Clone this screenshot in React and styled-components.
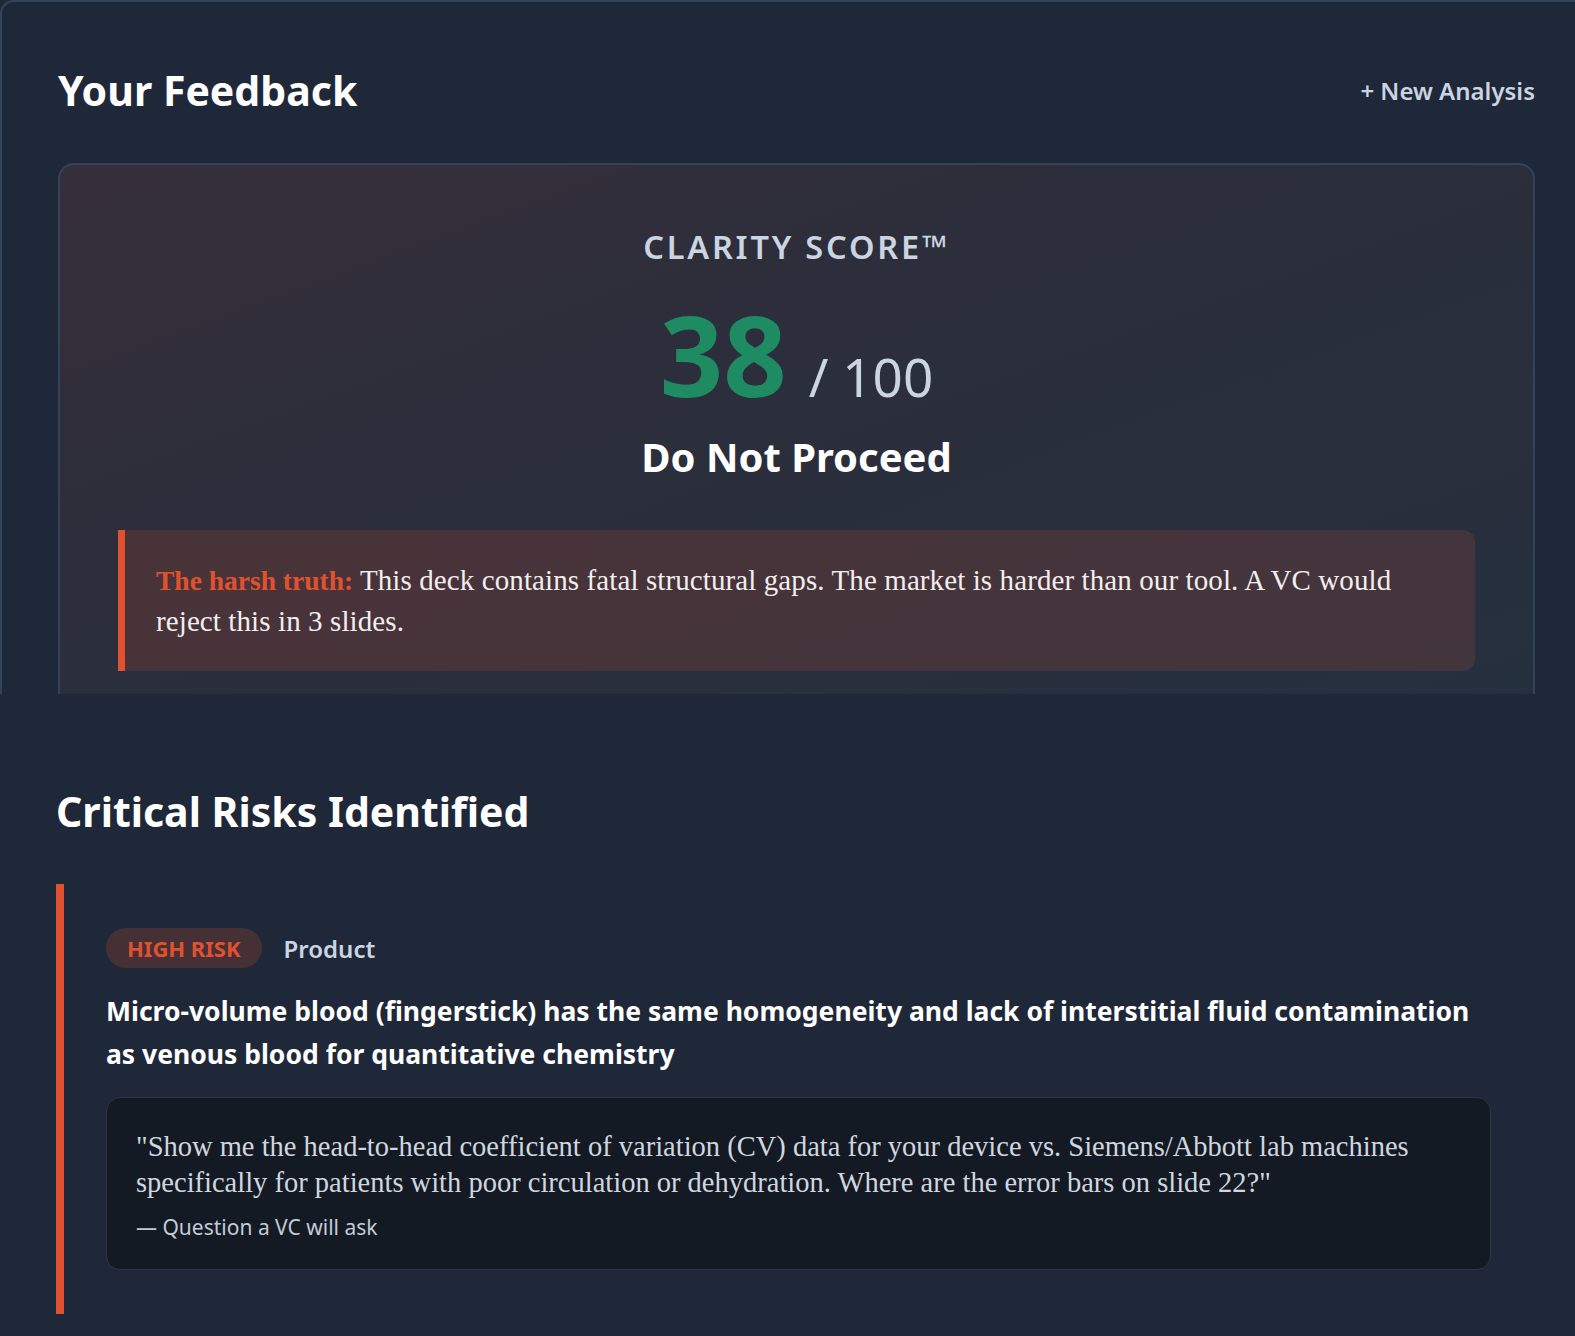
import styled, { createGlobalStyle } from "styled-components";

const GlobalStyle = createGlobalStyle`
  * { box-sizing: border-box; }
  html, body {
    margin: 0;
    padding: 0;
    background: #1f2839;
  }
  body {
    font-family: "Noto Sans", Roboto, "Liberation Sans", sans-serif;
    color: #f8fafc;
  }
`;

const serif = `"Liberation Serif", "DejaVu Serif", serif`;

const Page = styled.div`
  min-height: 1336px;
  background: #1f2839;
  overflow: hidden;
`;

// top panel, cut off at the bottom like in the capture
const FeedbackPanel = styled.section`
  height: 694px;
  overflow: hidden;
  border-top: 2px solid #34425a;
  border-left: 2px solid #34425a;
  border-top-left-radius: 14px;
  padding: 0 40px 0 56px;
`;

const PanelHeader = styled.div`
  display: flex;
  align-items: center;
  justify-content: space-between;
  padding-top: 63px;
`;

const PageTitle = styled.h1`
  margin: 0;
  font-size: 41px;
  line-height: 50px;
  font-weight: 700;
  color: #ffffff;
`;

const NewAnalysis = styled.a`
  font-size: 24px;
  font-weight: 600;
  color: #cbd5e1;
  cursor: pointer;
`;

const ScoreCard = styled.div`
  margin-top: 48px;
  border: 2px solid #34425a;
  border-radius: 16px;
  padding: 62px 58px 40px;
  text-align: center;
  background: linear-gradient(160deg, #362e3a 0%, #2c2e3b 40%, #25303f 100%);
`;

const ScoreLabel = styled.div`
  font-size: 32.5px;
  line-height: 40px;
  font-weight: 600;
  letter-spacing: 2.8px;
  color: #cbd5e1;
`;

const ScoreRow = styled.div`
  display: flex;
  justify-content: center;
  align-items: baseline;
  gap: 22px;
  margin-top: 32px;
`;

const ScoreValue = styled.span`
  font-size: 111px;
  line-height: 110px;
  font-weight: 700;
  color: ${(p) => p.color};
`;

const ScoreMax = styled.span`
  font-size: 53px;
  font-weight: 400;
  color: #cbd5e1;
`;

const Verdict = styled.h2`
  margin: 20px 0 0;
  font-size: 40px;
  line-height: 48px;
  font-weight: 700;
  color: #ffffff;
`;

const TruthBox = styled.div`
  margin-top: 49px;
  border-left: 7px solid #e0522f;
  border-radius: 0 12px 12px 0;
  background: rgba(224, 82, 47, 0.16);
  padding: 30px 28px 30px 31px;
  text-align: left;
  font-family: ${serif};
  font-size: 29px;
  line-height: 40px;
  letter-spacing: 0.1px;
  color: #f3eeee;
`;

const TruthLead = styled.strong`
  color: #e0522f;
  font-size: 27.5px;
  font-weight: 700;
  letter-spacing: 0;
`;

const RisksSection = styled.section`
  padding: 92px 40px 0 56px;
`;

const SectionTitle = styled.h2`
  margin: 0;
  font-size: 41px;
  line-height: 50px;
  font-weight: 700;
  color: #ffffff;
`;

const riskColors = {
  high: { main: "#e0522f", soft: "rgba(224, 82, 47, 0.2)" },
  medium: { main: "#e0a02f", soft: "rgba(224, 160, 47, 0.2)" },
};

const RiskCard = styled.div`
  margin-top: 48px;
  border-left: 8px solid ${(p) => riskColors[p.level].main};
  padding: 44px 44px 44px 42px;
`;

const RiskMeta = styled.div`
  display: flex;
  align-items: center;
  gap: 22px;
`;

const RiskBadge = styled.span`
  display: inline-flex;
  align-items: center;
  height: 40px;
  padding: 0 21px;
  border-radius: 20px;
  background: ${(p) => riskColors[p.level].soft};
  color: ${(p) => riskColors[p.level].main};
  font-size: 22px;
  font-weight: 700;
  text-transform: uppercase;
`;

const RiskCategory = styled.span`
  font-size: 24px;
  font-weight: 600;
  color: #cbd5e1;
`;

const RiskTitle = styled.h3`
  margin: 22px 0 0;
  font-size: 26.5px;
  line-height: 43px;
  font-weight: 700;
  color: #ffffff;
`;

const QuoteBox = styled.blockquote`
  margin: 21px 0 0;
  background: #141a24;
  border: 1px solid #2b3546;
  border-radius: 14px;
  padding: 31px 28px 27px 29px;
`;

const QuoteText = styled.p`
  margin: 0;
  font-family: ${serif};
  font-size: 28.5px;
  line-height: 36px;
  color: #d0d6df;
`;

const QuoteSource = styled.div`
  margin-top: 11px;
  font-size: 21px;
  line-height: 30px;
  color: #c3cbd6;
`;

const risks = [
  {
    level: "high",
    label: "High Risk",
    category: "Product",
    title:
      "Micro-volume blood (fingerstick) has the same homogeneity and lack of interstitial fluid contamination as venous blood for quantitative chemistry",
    question:
      "\"Show me the head-to-head coefficient of variation (CV) data for your device vs. Siemens/Abbott lab machines specifically for patients with poor circulation or dehydration. Where are the error bars on slide 22?\"",
  },
];

const App = () => {
  return (
    <Page>
      <GlobalStyle />
      <FeedbackPanel>
        <PanelHeader>
          <PageTitle>Your Feedback</PageTitle>
          <NewAnalysis>+ New Analysis</NewAnalysis>
        </PanelHeader>

        <ScoreCard>
          <ScoreLabel>CLARITY SCORE™</ScoreLabel>
          <ScoreRow>
            <ScoreValue color="#1f8b63">38</ScoreValue>
            <ScoreMax>/ 100</ScoreMax>
          </ScoreRow>
          <Verdict>Do Not Proceed</Verdict>
          <TruthBox>
            <TruthLead>The harsh truth:</TruthLead> This deck contains fatal
            structural gaps. The market is harder than our tool. A VC would
            reject this in 3 slides.
          </TruthBox>
        </ScoreCard>
      </FeedbackPanel>

      <RisksSection>
        <SectionTitle>Critical Risks Identified</SectionTitle>
        {risks.map((risk, i) => (
          <RiskCard key={i} level={risk.level}>
            <RiskMeta>
              <RiskBadge level={risk.level}>{risk.label}</RiskBadge>
              <RiskCategory>{risk.category}</RiskCategory>
            </RiskMeta>
            <RiskTitle>{risk.title}</RiskTitle>
            <QuoteBox>
              <QuoteText>{risk.question}</QuoteText>
              <QuoteSource>— Question a VC will ask</QuoteSource>
            </QuoteBox>
          </RiskCard>
        ))}
      </RisksSection>
    </Page>
  );
};

export default App;
